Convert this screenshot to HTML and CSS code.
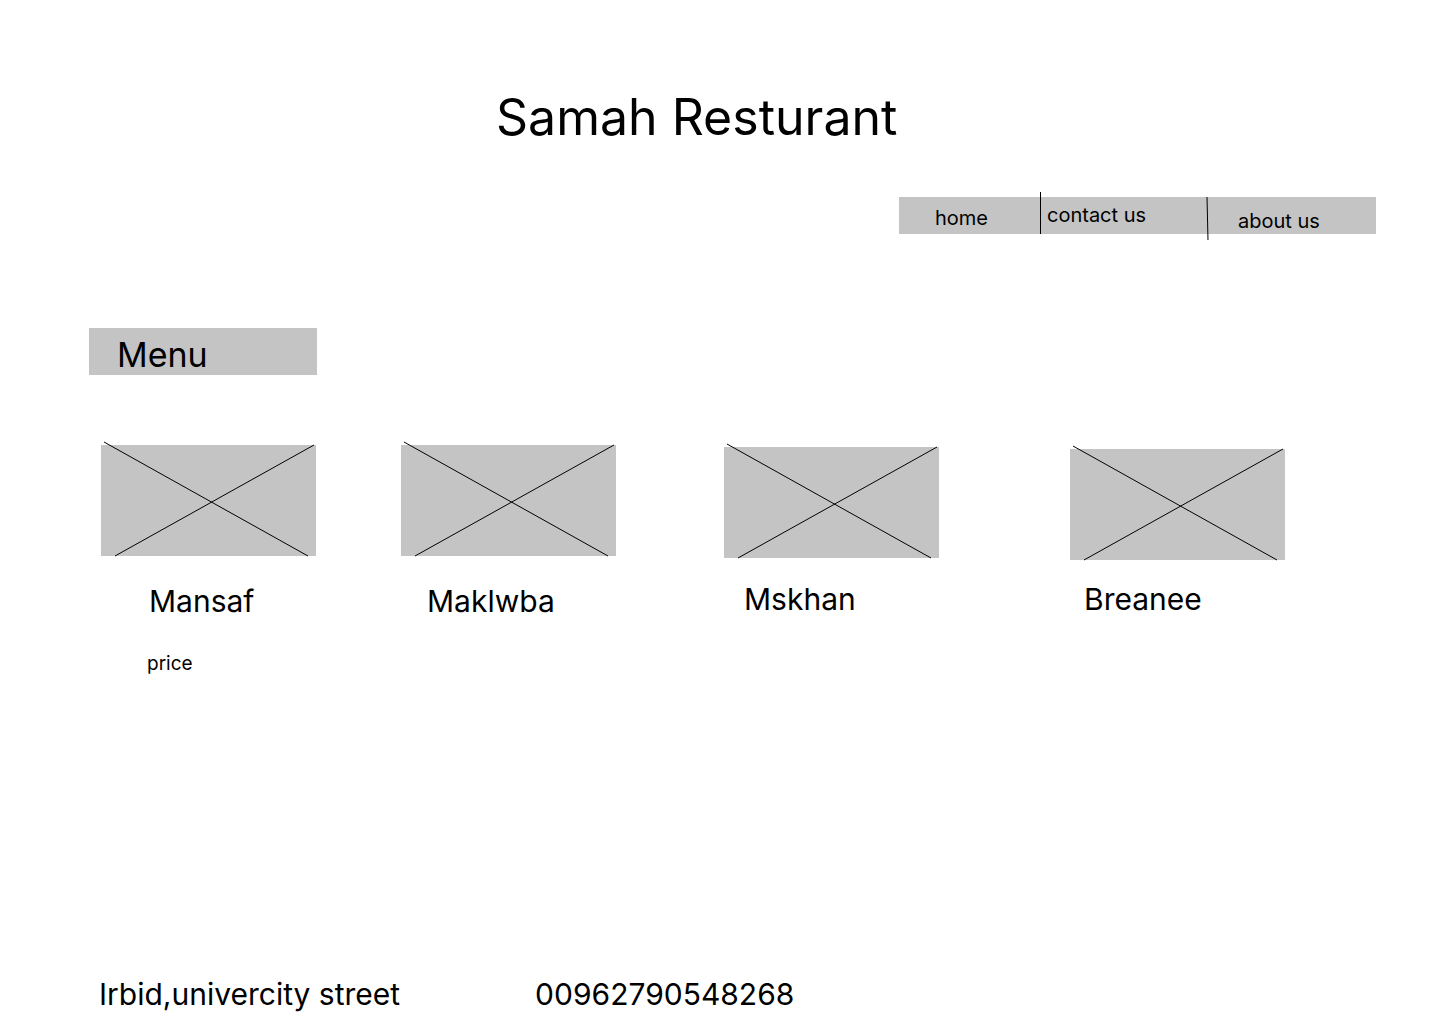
FILE: index.html
```html
<!DOCTYPE html>
<html>
<head>
    <title>Samah Resturant</title>
    <link rel="stylesheet" href="styles.css">
</head>
<body>
    <div class="page">
        <!-- タイトル -->
        <h1 class="title">Samah Resturant</h1>

        <!-- ナビゲーション -->
        <div class="nav-row">
            <nav class="nav">
                <a class="nav-item nav-home" href="#">home</a>
                <a class="nav-item nav-contact" href="#">contact us</a>
                <a class="nav-item nav-about" href="#">about us</a>
            </nav>
        </div>

        <!-- メニュー見出し -->
        <div class="menu-label">Menu</div>

        <!-- 料理一覧 -->
        <div class="dishes">
            <div class="dish dish-1">
                <svg class="thumb" width="215" height="111" viewBox="0 0 215 111">
                    <rect width="215" height="111" fill="#c4c4c4"/>
                    <line x1="3" y1="-3" x2="207" y2="111" stroke="#000" stroke-width="1"/>
                    <line x1="14" y1="111" x2="213" y2="0" stroke="#000" stroke-width="1"/>
                </svg>
                <div class="dish-name">Mansaf</div>
                <div class="dish-price">price</div>
            </div>
            <div class="dish dish-2">
                <svg class="thumb" width="215" height="111" viewBox="0 0 215 111">
                    <rect width="215" height="111" fill="#c4c4c4"/>
                    <line x1="3" y1="-3" x2="207" y2="111" stroke="#000" stroke-width="1"/>
                    <line x1="14" y1="111" x2="213" y2="0" stroke="#000" stroke-width="1"/>
                </svg>
                <div class="dish-name">Maklwba</div>
            </div>
            <div class="dish dish-3">
                <svg class="thumb" width="215" height="111" viewBox="0 0 215 111">
                    <rect width="215" height="111" fill="#c4c4c4"/>
                    <line x1="3" y1="-3" x2="207" y2="111" stroke="#000" stroke-width="1"/>
                    <line x1="14" y1="111" x2="213" y2="0" stroke="#000" stroke-width="1"/>
                </svg>
                <div class="dish-name">Mskhan</div>
            </div>
            <div class="dish dish-4">
                <svg class="thumb" width="215" height="111" viewBox="0 0 215 111">
                    <rect width="215" height="111" fill="#c4c4c4"/>
                    <line x1="3" y1="-3" x2="207" y2="111" stroke="#000" stroke-width="1"/>
                    <line x1="14" y1="111" x2="213" y2="0" stroke="#000" stroke-width="1"/>
                </svg>
                <div class="dish-name">Breanee</div>
            </div>
        </div>

        <!-- フッター -->
        <footer class="footer">
            <span class="address">Irbid,univercity street</span>
            <span class="phone">00962790548268</span>
        </footer>
    </div>
</body>
</html>
```

FILE: styles.css
```css
body {
    font-family: Inter, "Noto Sans", sans-serif;
    background-color: #fff;
    color: #000;
    margin: 0; /* 余白をリセット */
    padding: 0;
}
.page {
    display: flex;
    flex-direction: column;
    min-height: 1024px;
    box-sizing: border-box;
}
.title {
    margin: 92px 0 0 496px;
    font-size: 50px;
    font-weight: 400;
    line-height: 1;
}
.nav-row {
    display: flex;
    justify-content: flex-end;
    padding-right: 64px;
    margin-top: 55px;
}
.nav {
    display: flex;
    height: 37px;
    background-color: #c4c4c4;
}
.nav-item {
    position: relative;
    box-sizing: border-box;
    color: #000;
    text-decoration: none;
    font-size: 20px;
    line-height: 1;
}
.nav-home {
    width: 141px;
    padding: 11px 0 0 36px;
}
.nav-contact {
    width: 167px;
    padding: 8px 0 0 7px;
}
.nav-about {
    width: 169px;
    padding: 14px 0 0 31px;
}
/* 区切り線 */
.nav-contact::before,
.nav-about::before {
    content: "";
    position: absolute;
    left: 0;
    width: 1px;
    background-color: #000;
}
.nav-contact::before {
    top: -5px;
    height: 42px;
}
.nav-about::before {
    top: 0;
    height: 43px;
    transform: rotate(-1.3deg);
}
.menu-label {
    margin: 94px 0 0 89px;
    width: 228px;
    height: 47px;
    box-sizing: border-box;
    padding: 10px 0 0 28px;
    background-color: #c4c4c4;
    font-size: 34px;
    line-height: 1;
}
.dishes {
    display: flex;
    align-items: flex-start;
    margin-top: 70px;
    padding-left: 101px;
}
.dish {
    display: flex;
    flex-direction: column;
    width: 215px;
}
.thumb {
    display: block;
    overflow: visible;
}
.dish-name {
    font-size: 30px;
    line-height: 1;
}
.dish-price {
    margin: 38px 0 0 46px;
    font-size: 19px;
    line-height: 1;
}
.dish-1 .dish-name {
    margin: 30px 0 0 48px;
}
.dish-2 {
    margin-left: 85px;
}
.dish-2 .dish-name {
    margin: 30px 0 0 26px;
}
.dish-3 {
    margin: 2px 0 0 108px;
}
.dish-3 .dish-name {
    margin: 26px 0 0 20px;
}
.dish-4 {
    margin: 4px 0 0 131px;
}
.dish-4 .dish-name {
    margin: 24px 0 0 14px;
}
.footer {
    display: flex;
    gap: 135px;
    margin-top: auto;
    padding: 0 0 15px 99px;
    font-size: 30px;
    line-height: 1;
}
```
